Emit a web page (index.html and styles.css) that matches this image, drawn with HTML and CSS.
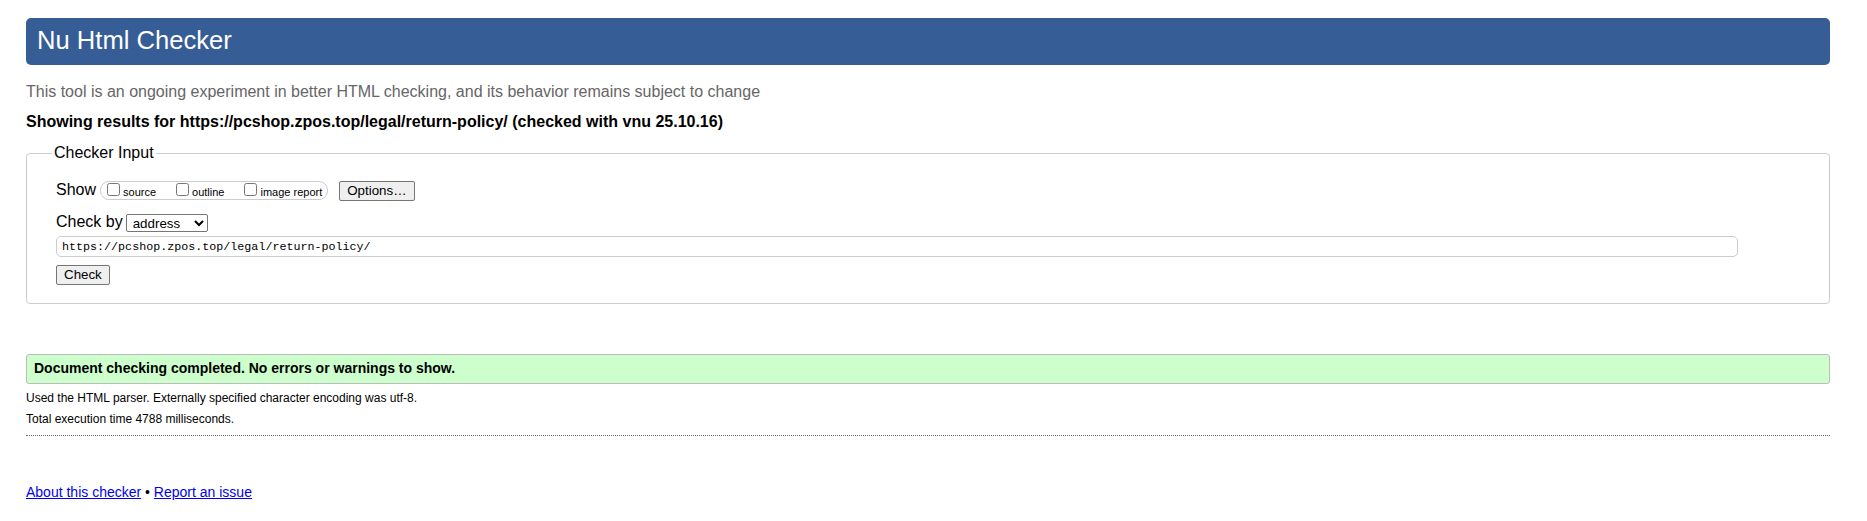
FILE: index.html
```html
<!DOCTYPE html>
<html lang="en">
<head>
<meta charset="utf-8">
<title>Showing results for https://pcshop.zpos.top/legal/return-policy/ - Nu Html Checker</title>
<link rel="stylesheet" href="styles.css">
</head>
<body>
<h1 class="title">Nu Html Checker</h1>
<p class="subtitle">This tool is an ongoing experiment in better HTML checking, and its behavior remains subject to change</p>
<p class="showing">Showing results for https://pcshop.zpos.top/legal/return-policy/ (checked with vnu 25.10.16)</p>
<form class="checker">
<fieldset class="fs">
<legend class="legend">Checker Input</legend>
<div class="fs-body">
<div class="row-show">
<span class="lbl">Show</span>
<span class="opts">
<label class="opt"><input type="checkbox" class="cb">source</label>
<label class="opt"><input type="checkbox" class="cb">outline</label>
<label class="opt opt-last"><input type="checkbox" class="cb">image report</label>
</span>
<button type="button" class="btn btn-options">Options…</button>
</div>
<div class="row-check">
<span class="lbl">Check by</span>
<select class="sel"><option>address</option></select>
</div>
<input type="url" class="url" value="https://pcshop.zpos.top/legal/return-policy/">
<button type="button" class="btn btn-check">Check</button>
</div>
</fieldset>
</form>
<p class="result">Document checking completed. No errors or warnings to show.</p>
<div class="details">
<p class="det">Used the HTML parser. Externally specified character encoding was utf-8.</p>
<p class="det">Total execution time 4788 milliseconds.</p>
</div>
<div class="sep"></div>
<p class="footer"><a href="#" class="lnk">About this checker</a> • <a href="#" class="lnk">Report an issue</a></p>
</body>
</html>
```
FILE: styles.css
```css
html, body {
  background: #fff;
  color: #000;
}
body {
  margin: 0;
  padding: 18px 37px 20px 26px;
  font-family: "Liberation Sans", Arial, sans-serif;
}
.title {
  margin: 0;
  height: 47px;
  box-sizing: border-box;
  padding: 0 11px 3px;
  background: #365d95;
  color: #fff;
  border-radius: 5px;
  font-size: 25.6px;
  font-weight: normal;
  line-height: 44px;
}
.subtitle {
  margin: 17px 0 0;
  font-size: 16px;
  line-height: 20px;
  color: #666;
}
.showing {
  margin: 10px 0 0;
  font-size: 16px;
  line-height: 20px;
  font-weight: bold;
  color: #000;
}
.checker {
  margin: 11px 0 0;
}
.fs {
  margin: 0;
  border: 1px solid #ccc;
  border-radius: 4px;
  padding: 17px 29px 18px 29px;
}
.legend {
  padding: 0 2px;
  margin-left: -4px;
  font-size: 16px;
  line-height: 20px;
}
.fs-body {
  display: flex;
  flex-direction: column;
  align-items: flex-start;
}
.row-show {
  display: flex;
  align-items: center;
  height: 21px;
}
.lbl {
  font-size: 16px;
  line-height: 20px;
  padding-bottom: 2px;
}
.opts {
  display: flex;
  align-items: flex-start;
  box-sizing: border-box;
  height: 19px;
  margin-left: 4px;
  padding: 0 5px 0 2px;
  border: 1px solid #ccc;
  border-radius: 9px;
}
.opt {
  display: flex;
  align-items: baseline;
  font-size: 11px;
  line-height: 13px;
  margin-right: 16px;
}
.opt-last {
  margin-right: 0;
}
.cb {
  width: 13px;
  height: 13px;
  margin: 1px 3px 0 4px;
}
.btn {
  font-family: "Liberation Sans", Arial, sans-serif;
  font-size: 13.333px;
  line-height: 16px;
  height: 20px;
  box-sizing: border-box;
  padding: 1px 7px;
  color: #000;
  background: #efefef;
  border: 1px solid #767676;
  border-radius: 2px;
}
.btn-options {
  margin-left: 11px;
}
.row-check {
  display: flex;
  align-items: center;
  height: 20px;
  margin-top: 12px;
}
.sel {
  margin-left: 3px;
  width: 82px;
  height: 18px;
  font-family: "Liberation Sans", Arial, sans-serif;
  font-size: 13.333px;
  color: #000;
  background: #fff;
  border: 1px solid #767676;
  border-radius: 2px;
  padding: 0 0 0 2px;
}
.url {
  margin: 3px 0 0;
  width: 1682px;
  height: 21px;
  box-sizing: border-box;
  border: 1px solid #ccc;
  border-radius: 5px;
  padding: 0 5px;
  font-family: "Liberation Mono", "DejaVu Sans Mono", monospace;
  font-size: 11.7px;
  color: #000;
  background: #fff;
}
.btn-check {
  margin-top: 8px;
}
.result {
  margin: 50px 0 0;
  padding: 5px 7px 6px;
  background: #ccffcc;
  border: 1px solid #bbb;
  border-radius: 3px;
  font-size: 14px;
  line-height: 17px;
  font-weight: bold;
}
.details {
  margin-top: 4px;
}
.det {
  margin: 0;
  font-size: 12px;
  line-height: 21px;
}
.sep {
  margin-top: 5px;
  border-top: 1px dotted #666;
}
.footer {
  margin: 48px 0 0;
  font-size: 14px;
  line-height: 17px;
}
.lnk {
  color: #0000ee;
}
```
